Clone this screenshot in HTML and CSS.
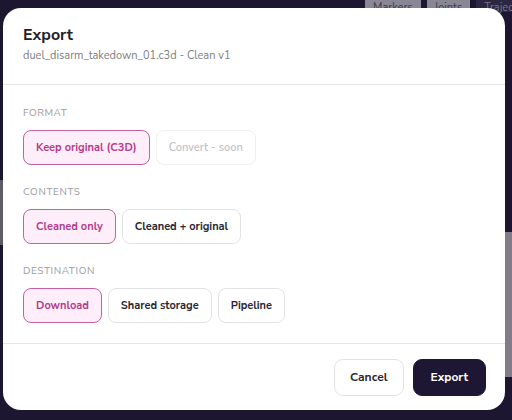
FILE: index.html
```html
<!DOCTYPE html>
<html>
<head>
<meta charset="utf-8">
<link rel="stylesheet" href="styles.css">
</head>
<body>
<div class="app">
  <div class="tabs">
    <span class="tab">Markers</span>
    <span class="tab">Joints</span>
    <span class="tab dark">Trajecto</span>
  </div>
  <div class="side-left"></div>
  <div class="side-right"></div>
</div>
<div class="dialog">
  <div class="head">
    <h1 class="title">Export</h1>
    <div class="sub">duel_disarm_takedown_01.c3d - Clean v1</div>
  </div>
  <div class="body">
    <div class="group">
      <div class="label">FORMAT</div>
      <div class="chips">
        <button class="chip on">Keep original (C3D)</button>
        <button class="chip off">Convert - soon</button>
      </div>
    </div>
    <div class="group">
      <div class="label">CONTENTS</div>
      <div class="chips">
        <button class="chip on">Cleaned only</button>
        <button class="chip">Cleaned + original</button>
      </div>
    </div>
    <div class="group">
      <div class="label">DESTINATION</div>
      <div class="chips">
        <button class="chip on">Download</button>
        <button class="chip">Shared storage</button>
        <button class="chip">Pipeline</button>
      </div>
    </div>
  </div>
  <div class="foot">
    <button class="btn cancel">Cancel</button>
    <button class="btn primary">Export</button>
  </div>
</div>
</body>
</html>
```
FILE: styles.css
```css
* { box-sizing: border-box; }
html, body { margin: 0; padding: 0; }
body {
  width: 512px;
  height: 420px;
  background: #1c1631;
  font-family: "Nunito Sans", Lato, "Noto Sans", sans-serif;
  position: relative;
  overflow: hidden;
}
.app { position: absolute; inset: 0; }
.tabs {
  position: absolute;
  top: 0;
  left: 365px;
  display: flex;
  gap: 6px;
}
.tab {
  display: block;
  height: 12px;
  padding: 1px 8px 0;
  background: #8a8795;
  color: #3d3a4a;
  font-size: 11px;
  line-height: 14px;
  white-space: nowrap;
}
.tab.dark { background: #2c2640; color: #77738a; padding-right: 0; }
.side-left {
  position: absolute; left: 0; top: 180px; width: 4px; height: 65px; background: #5f5c68;
}
.side-right {
  position: absolute; right: 0; top: 232px; width: 8px; height: 145px; background: #807d88;
}
.dialog {
  position: absolute;
  left: 3px;
  top: 8px;
  width: 502px;
  height: 402px;
  background: #ffffff;
  border-radius: 18px;
  display: flex;
  flex-direction: column;
  overflow: hidden;
}
.head {
  padding: 16px 20px 21px;
  border-bottom: 1px solid #e4e4e6;
}
.title {
  margin: 0;
  font-size: 16px;
  line-height: 22px;
  font-weight: 700;
  color: #22202a;
}
.sub {
  margin-top: 3px;
  font-size: 11px;
  line-height: 14px;
  color: #808080;
}
.body {
  padding: 21px 20px 20px;
  display: flex;
  flex-direction: column;
  gap: 20px;
  border-bottom: 1px solid #e4e4e6;
}
.label {
  font-size: 10px;
  line-height: 14px;
  letter-spacing: 0.6px;
  color: #9a9aa0;
  margin-bottom: 10px;
}
.chips { display: flex; gap: 6px; }
.chip {
  height: 35px;
  padding: 0 12px;
  border: 1px solid #e2e2e6;
  background: #fff;
  border-radius: 8px;
  font-family: inherit;
  font-size: 11px;
  font-weight: 700;
  color: #2a2832;
}
.chip.on {
  border-color: #c4619f;
  background: #fdeef9;
  color: #b53d8c;
}
.chip.off {
  color: #c2c2c6;
  border-color: #efeff1;
  font-weight: 600;
}
.foot {
  flex: 1;
  display: flex;
  justify-content: flex-end;
  align-items: center;
  gap: 9px;
  padding: 0 19px 0 20px;
}
.btn {
  height: 37px;
  padding: 0 17px;
  border-radius: 9px;
  font-family: inherit;
  font-size: 12px;
  font-weight: 700;
}
.cancel {
  background: #fff;
  border: 1px solid #e2e2e6;
  color: #2a2832;
  padding: 0 15px;
}
.primary {
  background: #1e1733;
  border: 1px solid #1e1733;
  color: #fff;
}
```
